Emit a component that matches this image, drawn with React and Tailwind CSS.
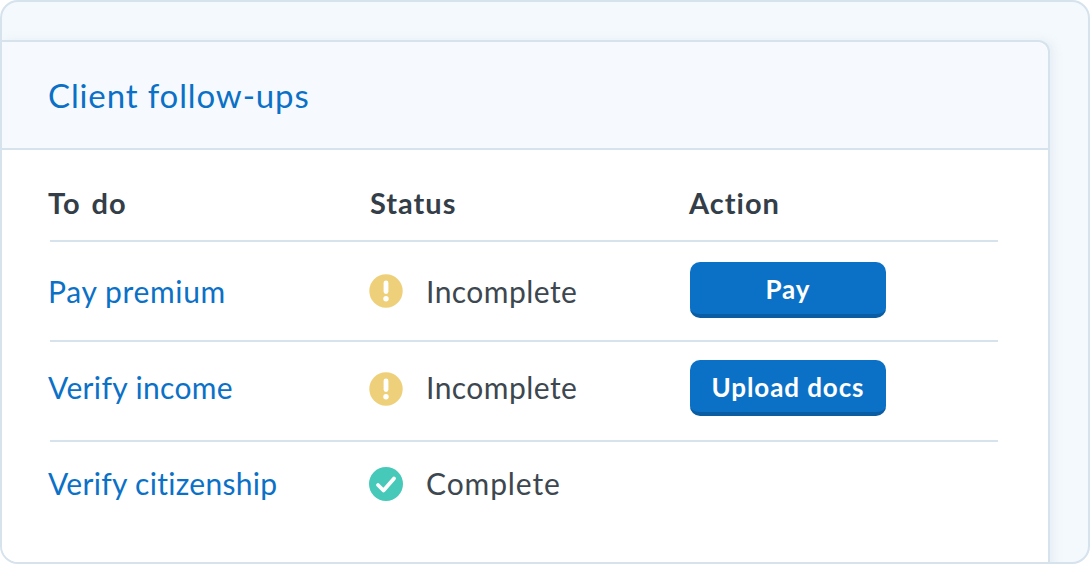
const tasks = [
  { name: "Pay premium", status: "Incomplete", action: "Pay", row: "pt-[20px]", text: "mt-[9px]", icon: "", nameTrack: "tracking-[0.65px]", statusTrack: "tracking-[0.45px]" },
  { name: "Verify income", status: "Incomplete", action: "Upload docs", row: "pt-[18px]", text: "mt-[7px]", icon: "mt-[4px]", nameTrack: "tracking-[0.35px]", statusTrack: "tracking-[0.45px]" },
  { name: "Verify citizenship", status: "Complete", row: "pt-[20px]", text: "mt-[1px]", icon: "mt-[2px]", nameTrack: "tracking-[0.3px]", statusTrack: "tracking-[0.9px]" },
];

function WarnIcon({ className }) {
  return (
    <svg width="34" height="34" viewBox="0 0 34 34" className={`shrink-0 ${className}`}>
      <circle cx="17" cy="17" r="16.7" fill="#eed07a" />
      <rect x="14.6" y="6.5" width="4.8" height="13.5" rx="2.4" fill="#fff" />
      <circle cx="17" cy="24.8" r="2.7" fill="#fff" />
    </svg>
  );
}

function CheckIcon({ className }) {
  return (
    <svg width="34" height="34" viewBox="0 0 34 34" className={`shrink-0 ${className}`}>
      <circle cx="17" cy="17" r="17" fill="#46c9b9" />
      <path d="M9 18l5.5 5.5L25 11.5" fill="none" stroke="#fff" strokeWidth="3.8" strokeLinecap="round" strokeLinejoin="round" />
    </svg>
  );
}

export default function App() {
  return (
    <div className="w-[1090px] h-[564px] overflow-hidden bg-white font-['Lato',sans-serif]">
      <div className="h-full border-2 border-[#d6e2ec] rounded-[18px] bg-[#f4f9fd] pt-[38px] pr-[38px] overflow-hidden">
        <div className="h-[530px] bg-white border-t-2 border-r-2 border-[#d6e2ec] rounded-tr-[12px] shadow-[4px_0_8px_rgba(214,226,236,0.45)]">
          <div className="h-[106px] flex items-center pl-[47px] rounded-tr-[12px] bg-[#f6fafe] border-b-2 border-[#d6e2ec] box-content">
            <h1 className="text-[33px] text-[#0b71c7] tracking-[0.87px] -ml-[1px] mt-[2px]">Client follow-ups</h1>
          </div>

          <div className="pl-[48px] pr-[50px]">
            <div className="h-[92px] grid grid-cols-[320px_319px_1fr] items-center border-b-2 border-[#d6e2ec] text-[29px] font-bold text-[#333e48] tracking-[1px]">
              <div className="-ml-[2px] mt-[16px] [word-spacing:3px]">To do</div>
              <div className="mt-[16px]">Status</div>
              <div className="mt-[16px]">Action</div>
            </div>

            {tasks.map((t, i) => (
              <div
                key={t.name}
                className={`h-[100px] grid grid-cols-[320px_319px_1fr] items-start text-[30px] leading-[40px] ${i < 2 ? "border-b-2 border-[#d6e2ec]" : ""} ${t.row}`}
              >
                <div className={`-ml-[2px] text-[#0b71c7] ${t.nameTrack} ${t.text}`}>{t.name}</div>
                <div className={`-ml-[1px] flex items-center gap-[23px] text-[#3c4750] ${t.statusTrack} ${t.text}`}>
                  {t.status === "Complete" ? <CheckIcon className={t.icon} /> : <WarnIcon className={t.icon} />}
                  <span>{t.status}</span>
                </div>
                {t.action && (
                  <button className="ml-[1px] w-[196px] h-[56px] rounded-[10px] bg-[#0b71c7] border-b-4 border-[#0a5da3] text-[26px] leading-[40px] font-bold text-white tracking-[0.9px]">
                    <span className="block mt-[1px]">{t.action}</span>
                  </button>
                )}
              </div>
            ))}
          </div>
        </div>
      </div>
    </div>
  );
}
